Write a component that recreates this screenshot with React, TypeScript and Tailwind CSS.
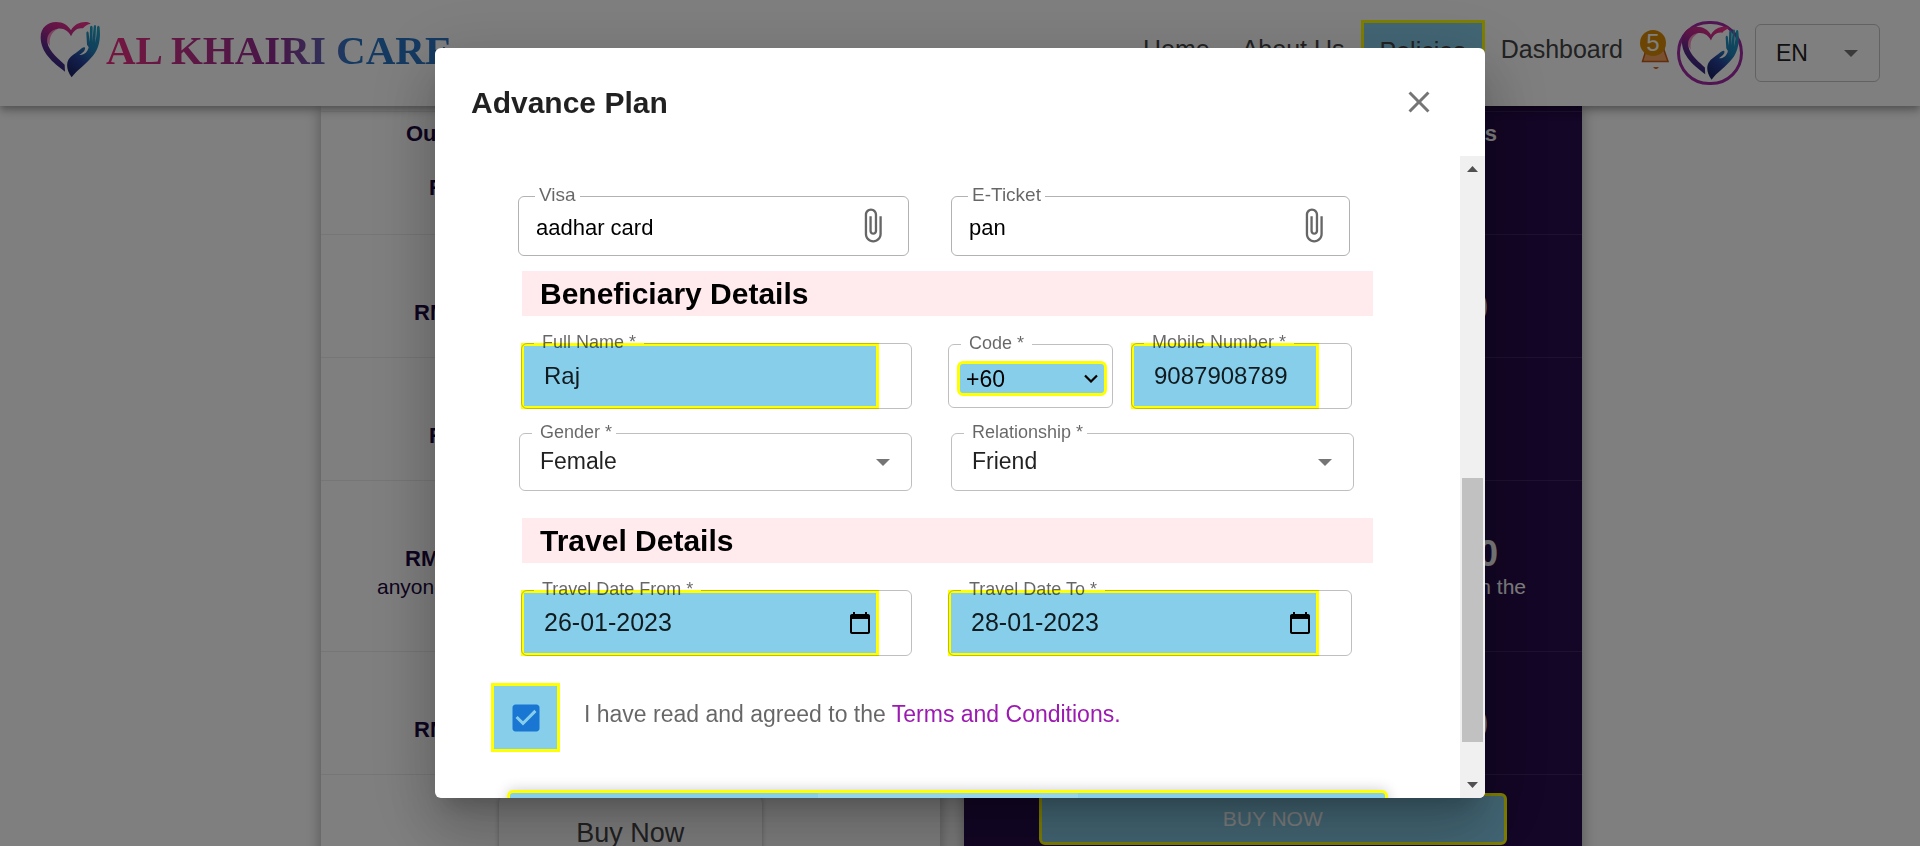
import { useState, type ReactNode } from "react";

const FONT = "font-['Liberation_Sans',Arial,sans-serif]";

function HeartHand({ id, className }: { id: string; className: string }) {
  return (
    <svg viewBox="0 0 180 169" className={className} aria-hidden="true">
      <defs>
        <linearGradient id={`${id}-heart`} x1="0.75" y1="0" x2="0.25" y2="1">
          <stop offset="0" stopColor="#f0318c" />
          <stop offset="0.35" stopColor="#b8288e" />
          <stop offset="0.65" stopColor="#5c2a8c" />
          <stop offset="1" stopColor="#232a7c" />
        </linearGradient>
        <linearGradient id={`${id}-hand`} x1="0.8" y1="0" x2="0.3" y2="1">
          <stop offset="0" stopColor="#1fa0c4" />
          <stop offset="0.4" stopColor="#2180b8" />
          <stop offset="0.7" stopColor="#26409a" />
          <stop offset="1" stopColor="#1c2468" />
        </linearGradient>
      </defs>
      <path
        fill={`url(#${id}-heart)`}
        d="M75 151C38 124 2 92 2 48C2 18 24 2 48 2C70 2 84 12 93 27C102 10 118 2 136 2C143 2 149 4 152 7C140 10 133 15 129 21C112 18 100 28 93 45C86 30 72 20 54 22C30 26 20 44 22 62C26 92 60 116 74 130Z"
      />
      <path
        fill="#f0318c"
        opacity="0.55"
        d="M22 62C18 44 28 26 54 22C36 32 26 46 30 74Z"
      />
      <path
        fill={`url(#${id}-hand)`}
        d="M95 168C80 148 78 128 86 114C94 102 104 98 116 88C124 81 132 75 135 79C137 86 130 93 118 101C134 102 143 91 146 78L141 70L139 36C139 29 146 29 146 36L149 62L150 20C150 11 158 11 158 20L157 62L161 17C162 8 169 9 168 18L166 64C169 50 170 34 171 18C173 10 179 12 179 20C182 50 178 80 160 102C140 128 112 145 95 168Z"
      />
    </svg>
  );
}

function Bell() {
  return (
    <div className="relative ml-0.5 mt-[30px] h-10 w-7 shrink-0">
      <svg viewBox="0 0 28 40" className="h-10 w-7" aria-hidden="true">
        <path
          d="M1.500 31.500L5 20C5 10 8 4 14 4S23 10 23 20L27 31.500Z"
          fill="#f2a262"
          stroke="#c85a14"
          strokeWidth="1.500"
        />
        <path d="M12 37h6l-2 2h-2z" fill="#e0661a" />
      </svg>
      <span className="absolute -left-px top-0 flex size-[26px] items-center justify-center rounded-full bg-[#d98a06] text-2xl leading-none text-white">
        5
      </span>
    </div>
  );
}

function Triangle({ className }: { className: string }) {
  return (
    <svg viewBox="0 0 14 7" className={`h-[7px] w-3.5 ${className}`} aria-hidden="true">
      <path d="M0 0h14L7 7z" fill="#757575" />
    </svg>
  );
}

function Header() {
  return (
    <header className="relative z-10 flex h-[106px] w-full bg-white pl-10 pr-10 shadow-[0_3px_6px_-1px_rgba(0,0,0,0.2),0_6px_8px_0_rgba(0,0,0,0.14),0_1px_15px_0_rgba(0,0,0,0.12)]">
      <div className="flex items-start">
        <HeartHand id="logo" className="mt-[21px] h-[57px] w-[60px]" />
        <span className="ml-1.5 mt-[26px] whitespace-nowrap bg-linear-to-r from-[#ec2a80] via-[#8c2a90] via-50% to-[#2a74c4] to-70% bg-clip-text font-['Liberation_Serif',serif] text-[41px] font-bold leading-[48px] text-transparent">
          AL KHAIRI CARE
        </span>
      </div>
      <nav className="ml-auto flex items-start pt-5 text-[25px] leading-7 text-[#444]">
        <a href="#home" className="px-4 py-[15px]">Home</a>
        <a href="#about" className="px-4 py-[15px]">About Us</a>
        <a href="#policies" className="border-3 border-[#ff0] bg-[#87ceeb] px-4 py-3.5">Policies</a>
        <a href="#dashboard" className="px-4 py-[15px]">Dashboard</a>
      </nav>
      <Bell />
      <div className="ml-2 mt-[21px] flex h-16 w-[66px] items-center justify-center rounded-full border-3 border-[#a22aa8]">
        <HeartHand id="avatar" className="h-[54px] w-[58px]" />
      </div>
      <div className="relative ml-3 mt-6 h-[58px] w-[125px]">
        <select
          aria-label="Language"
          className="size-full appearance-none rounded-md border border-[#c4c4c4] bg-transparent pl-5 text-[23px] text-[#222]"
        >
          <option>EN</option>
        </select>
        <Triangle className="pointer-events-none absolute right-[22px] top-[26px]" />
      </div>
    </header>
  );
}

function PlanRow({ tall, className, children }: { tall?: boolean; className: string; children?: ReactNode }) {
  return (
    <div
      className={`flex flex-col border-t text-[22px] font-bold ${tall ? "h-[171px]" : "h-[123px]"} ${className}`}
    >
      {children}
    </div>
  );
}

const LIGHT = "border-[#ececec] text-[#1c0840]";
const DARK = "items-end border-white/10 text-white";

function Plans() {
  return (
    <main className="flex items-start gap-6 pl-[321px] pr-[338px]">
      <section className="h-[760px] flex-1 bg-white pt-[5px] shadow-[0_2px_14px_rgba(0,0,0,0.35)]">
        <PlanRow className={LIGHT}>
          <p className="mt-2.5 pl-[85px] leading-6">Our</p>
          <p className="mt-[30px] pl-[108px] leading-6">R</p>
        </PlanRow>
        <PlanRow className={LIGHT}>
          <p className="mt-[66px] pl-[93px] leading-6">RM</p>
        </PlanRow>
        <PlanRow className={LIGHT}>
          <p className="mt-[66px] pl-[108px] leading-6">R</p>
        </PlanRow>
        <PlanRow tall className={LIGHT}>
          <p className="mt-[66px] pl-[84px] leading-6">RM</p>
          <p className="mt-1 pl-14 text-[21px] font-normal leading-6">anyone</p>
        </PlanRow>
        <PlanRow className={LIGHT}>
          <p className="mt-[66px] pl-[93px] leading-6">RM</p>
        </PlanRow>
        <div className="flex justify-center border-t border-[#ececec] pt-5">
          <button className="h-[76px] w-[263px] rounded-lg text-[27px] text-[#444] shadow-[0_0_5px_rgba(0,0,0,0.3)]">
            Buy Now
          </button>
        </div>
      </section>
      <section className="h-[760px] flex-1 bg-[#260c4c] pt-[5px] shadow-[0_2px_14px_rgba(0,0,0,0.35)]">
        <PlanRow className={DARK}>
          <p className="mt-2.5 pr-[85px] leading-6">Benefits</p>
        </PlanRow>
        <PlanRow className={DARK}>
          <p className="mt-[57px] pr-[94px] text-4xl leading-8">0</p>
        </PlanRow>
        <PlanRow className={DARK} />
        <PlanRow tall className={DARK}>
          <p className="mt-[57px] pr-[84px] text-4xl leading-8">0</p>
          <p className="mt-[5px] pr-14 text-[21px] font-normal leading-6">in the</p>
        </PlanRow>
        <PlanRow className={DARK}>
          <p className="mt-[57px] pr-[94px] text-4xl leading-8">0</p>
        </PlanRow>
        <div className="flex justify-center border-t border-white/10 pt-[18px]">
          <button className="h-[52px] w-[468px] rounded-md border-3 border-[#ff0] bg-[#87ceeb] text-[21px] text-white">
            BUY NOW
          </button>
        </div>
      </section>
    </main>
  );
}

type OutlineProps = {
  label: string;
  htmlFor: string;
  className?: string;
  border?: string;
  text?: string;
  legend?: string;
  children: ReactNode;
};

function Outlined({
  label,
  htmlFor,
  className = "",
  border = "border-black/25",
  text = "text-lg",
  legend = "px-2",
  children,
}: OutlineProps) {
  return (
    <div className={`relative min-w-0 ${className}`}>
      {children}
      <fieldset
        aria-hidden="true"
        className={`pointer-events-none absolute inset-x-0 -top-[5px] bottom-0 rounded-md border pl-3 ${border}`}
      >
        <legend className={`invisible h-[11px] whitespace-nowrap leading-none ${legend} ${text}`}>{label}</legend>
      </fieldset>
      <label
        htmlFor={htmlFor}
        className={`absolute left-[21px] -top-[11px] whitespace-nowrap leading-5 text-black/60 ${text}`}
      >
        {label}
      </label>
    </div>
  );
}

function FileField({ id, label, value }: { id: string; label: string; value: string }) {
  return (
    <Outlined
      label={label}
      htmlFor={id}
      border="border-black/30"
      text="text-[19px]"
      legend="ml-1 px-1"
      className="flex h-[60px] items-center px-[18px]"
    >
      <input id={id} defaultValue={value} className="w-full min-w-0 flex-1 bg-transparent pt-0.5 text-[22px] text-black outline-none" />
      <button aria-label={`Attach ${label}`} className="shrink-0 pb-0.5">
        <svg viewBox="0 0 24 24" className="size-[37px]" fill="#666">
          <path d="M16.5 6v11.500c0 2.210-1.790 4-4 4s-4-1.790-4-4V5c0-1.380 1.120-2.500 2.500-2.500s2.500 1.120 2.500 2.500v10.500c0 .55-.45 1-1 1s-1-.45-1-1V6H10v9.500c0 1.380 1.120 2.500 2.500 2.500s2.500-1.120 2.500-2.500V5c0-2.210-1.790-4-4-4S7 2.790 7 5v12.500c0 3.040 2.460 5.500 5.500 5.500s5.500-2.460 5.500-5.500V6h-1.500z" />
        </svg>
      </button>
    </Outlined>
  );
}

function MarkedField({ id, label, value, date }: { id: string; label: string; value: string; date?: boolean }) {
  return (
    <Outlined label={label} htmlFor={id} className="h-[66px] pr-[33px]">
      <div className="flex h-full items-center border-3 border-[#ff0] bg-[#87ceeb] pl-5 pr-1">
        <input
          id={id}
          defaultValue={value}
          className={`w-full min-w-0 flex-1 bg-transparent text-black/87 outline-none ${date ? "text-[25px]" : "text-2xl"}`}
        />
        {date && (
          <button aria-label={`Choose ${label}`} className="shrink-0">
            <svg viewBox="0 0 24 24" className="size-6">
              <path
                fill="#000"
                d="M20 3h-1V1h-2v2H7V1H5v2H4c-1.100 0-2 .9-2 2v16c0 1.100.9 2 2 2h16c1.100 0 2-.9 2-2V5c0-1.100-.9-2-2-2zm0 18H4V8h16v13z"
              />
            </svg>
          </button>
        )}
      </div>
    </Outlined>
  );
}

function SelectField({ id, label, value }: { id: string; label: string; value: string }) {
  return (
    <Outlined label={label} htmlFor={id} legend="pl-2 pr-1" className="h-[58px]">
      <select id={id} className="size-full appearance-none bg-transparent pb-0.5 pl-[21px] text-[23px] text-black/87 outline-none">
        <option>{value}</option>
      </select>
      <Triangle className="pointer-events-none absolute right-[22px] top-[26px]" />
    </Outlined>
  );
}

function CodeField() {
  return (
    <Outlined label="Code *" htmlFor="code" className="h-16 px-2 pl-[9px] pr-1.5 pt-[17px]">
      <div className="relative">
        <select
          id="code"
          className="h-[35px] w-full appearance-none rounded-md border-3 border-[#ff0] bg-[#87ceeb] pl-1.5 text-[23px] leading-7 text-black outline-none"
        >
          <option>+60</option>
        </select>
        <svg viewBox="0 0 14 9" className="pointer-events-none absolute right-[9px] top-[13px] h-[9px] w-3.5" aria-hidden="true">
          <path d="M1 1.500l6 6 6-6" fill="none" stroke="#000" strokeWidth="2.200" />
        </svg>
      </div>
    </Outlined>
  );
}

function Band({ className, children }: { className: string; children: ReactNode }) {
  return (
    <h3 className={`ml-[87px] mr-[87px] bg-[#ffebee] pl-[18px] text-3xl leading-[45px] font-bold text-black ${className}`}>
      {children}
    </h3>
  );
}

function ScrollBar() {
  return (
    <div className="flex w-[25px] shrink-0 flex-col items-center bg-[#f0f0f0] pb-2.5 pt-2.5" aria-hidden="true">
      <svg viewBox="0 0 11 6" className="h-1.5 w-[11px]">
        <path d="M0 6h11L5.500 0z" fill="#505050" />
      </svg>
      <div className="flex w-full flex-1 flex-col px-0.5">
        <div className="grow-[306]" />
        <div className="grow-[264] bg-[#c1c1c1]" />
        <div className="grow-[40]" />
      </div>
      <svg viewBox="0 0 11 6" className="h-1.5 w-[11px]">
        <path d="M0 0h11L5.500 6z" fill="#505050" />
      </svg>
    </div>
  );
}

function Dialog() {
  const [agreed, setAgreed] = useState(true);
  return (
    <div
      role="dialog"
      aria-labelledby="dialog-title"
      className="flex h-full w-full max-w-[1050px] flex-col overflow-hidden rounded-md bg-white shadow-[0_16px_22px_-10px_rgba(0,0,0,0.2),0_36px_57px_5px_rgba(0,0,0,0.14),0_14px_69px_12px_rgba(0,0,0,0.12)]"
    >
      <div className="flex h-[108px] shrink-0 items-center justify-between pl-9 pr-12">
        <h2 id="dialog-title" className="pt-0.5 text-3xl font-bold text-black/87">Advance Plan</h2>
        <button aria-label="Close">
          <svg viewBox="0 0 24 24" className="size-9" fill="#757575">
            <path d="M19 6.410 17.590 5 12 10.590 6.410 5 5 6.410 10.590 12 5 17.590 6.410 19 12 13.410 17.590 19 19 17.590 13.410 12z" />
          </svg>
        </button>
      </div>
      <div className="flex min-h-0 flex-1">
        <form className="min-w-0 flex-1 overflow-hidden pt-10" onSubmit={(e) => e.preventDefault()}>
          <div className="ml-[83px] mr-[110px] grid grid-cols-[minmax(0,391fr)_minmax(0,399fr)] gap-[42px]">
            <FileField id="visa" label="Visa" value="aadhar card" />
            <FileField id="ticket" label="E-Ticket" value="pan" />
          </div>
          <Band className="mt-[15px]">Beneficiary Details</Band>
          <div className="ml-[86px] mr-[108px] mt-[27px] grid grid-cols-[minmax(0,391fr)_minmax(0,404fr)] items-center gap-9">
            <MarkedField id="name" label="Full Name *" value="Raj" />
            <div className="grid grid-cols-[minmax(0,165fr)_minmax(0,221fr)] items-center gap-[18px]">
              <CodeField />
              <MarkedField id="mobile" label="Mobile Number *" value="9087908789" />
            </div>
          </div>
          <div className="ml-[84px] mr-[106px] mt-6 grid grid-cols-[minmax(0,393fr)_minmax(0,403fr)] gap-[39px]">
            <SelectField id="gender" label="Gender *" value="Female" />
            <SelectField id="relationship" label="Relationship *" value="Friend" />
          </div>
          <Band className="mt-[27px]">Travel Details</Band>
          <div className="ml-[86px] mr-[108px] mt-[27px] grid grid-cols-[minmax(0,391fr)_minmax(0,404fr)] gap-9">
            <MarkedField id="from" label="Travel Date From *" value="26-01-2023" date />
            <MarkedField id="to" label="Travel Date To *" value="28-01-2023" date />
          </div>
          <div className="ml-14 mt-[27px] flex">
            <div className="relative size-[69px]">
              <input
                id="agree"
                type="checkbox"
                checked={agreed}
                onChange={(e) => setAgreed(e.target.checked)}
                className="block size-full appearance-none border-3 border-[#ff0] bg-[#87ceeb]"
              />
              <svg viewBox="0 0 24 24" className="pointer-events-none absolute inset-0 m-auto size-9" fill="#1976d2" aria-hidden="true">
                {agreed ? (
                  <path d="M19 3H5c-1.110 0-2 .9-2 2v14c0 1.100.89 2 2 2h14c1.110 0 2-.9 2-2V5c0-1.100-.89-2-2-2zm-9 14l-5-5 1.410-1.410L10 14.170l7.590-7.590L19 8l-9 9z" />
                ) : (
                  <path d="M19 5v14H5V5h14m0-2H5c-1.100 0-2 .9-2 2v14c0 1.100.9 2 2 2h14c1.100 0 2-.9 2-2V5c0-1.100-.9-2-2-2z" />
                )}
              </svg>
            </div>
            <p className="ml-6 mt-4 text-[23px] leading-[30px] text-black/60">
              <label htmlFor="agree">I have read and agreed to the </label>
              <a href="#terms" className="text-[#9c1ab1]">Terms and Conditions.</a>
            </p>
          </div>
          <div className="ml-[72px] mr-[72px] mt-[38px]">
            <button
              aria-label="Submit"
              className="flex h-14 w-full justify-center rounded-md border-3 border-[#ff0] bg-[#87ceeb] shadow-[0_0_14px_rgba(0,0,0,0.2)]"
            >
              <span className="h-full w-[260px] bg-white/12" />
            </button>
          </div>
        </form>
        <ScrollBar />
      </div>
    </div>
  );
}

export default function App() {
  return (
    <div className={`relative h-screen overflow-hidden bg-white ${FONT}`}>
      <Header />
      <Plans />
      <div className="fixed inset-0 z-20 flex items-center justify-center bg-black/50 py-12">
        <Dialog />
      </div>
    </div>
  );
}
